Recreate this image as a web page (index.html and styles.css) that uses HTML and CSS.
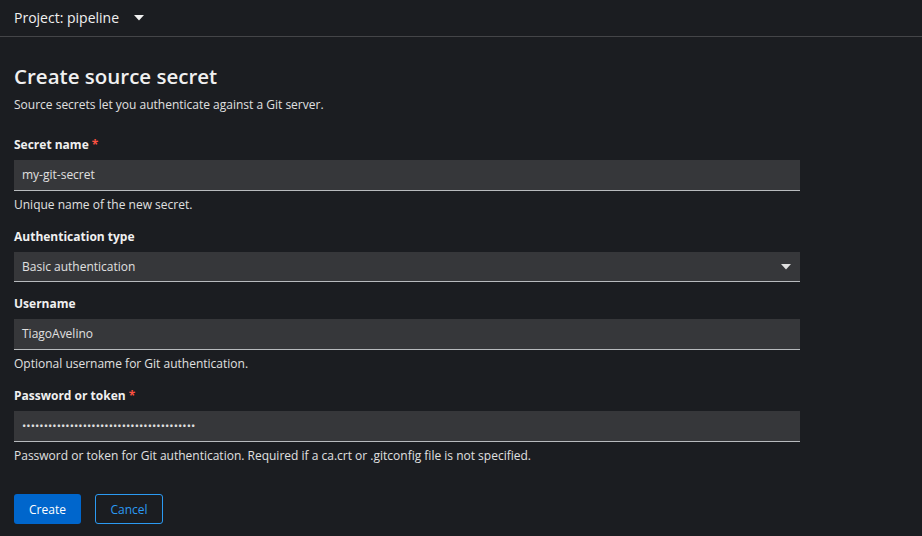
FILE: index.html
```html
<!DOCTYPE html>
<html lang="en">
<head>
<meta charset="utf-8">
<title>Create source secret</title>
<link rel="stylesheet" href="styles.css">
</head>
<body>
<header class="topbar">
  <button class="project-toggle" type="button">
    <span>Project: pipeline</span>
    <svg class="caret" width="10" height="6" viewBox="0 0 10 6"><path d="M0 0h10L5 5.5z" fill="#f0f0f0"/></svg>
  </button>
</header>
<main class="page">
  <h1 class="title">Create source secret</h1>
  <p class="lead">Source secrets let you authenticate against a Git server.</p>
  <form class="form">
    <div class="group">
      <label class="label">Secret name <span class="req">*</span></label>
      <div class="input">my-git-secret</div>
      <div class="help">Unique name of the new secret.</div>
    </div>
    <div class="group group-select">
      <label class="label">Authentication type</label>
      <div class="input select">
        <span>Basic authentication</span>
        <svg class="caret" width="10" height="6" viewBox="0 0 10 6"><path d="M0 0h10L5 5.5z" fill="#e0e0e0"/></svg>
      </div>
    </div>
    <div class="group">
      <label class="label">Username</label>
      <div class="input">TiagoAvelino</div>
      <div class="help">Optional username for Git authentication.</div>
    </div>
    <div class="group group-tight">
      <label class="label">Password or token <span class="req">*</span></label>
      <div class="input dots">••••••••••••••••••••••••••••••••••••••••</div>
      <div class="help">Password or token for Git authentication. Required if a ca.crt or .gitconfig file is not specified.</div>
    </div>
    <div class="actions">
      <button class="btn primary" type="button">Create</button>
      <button class="btn secondary" type="button">Cancel</button>
    </div>
  </form>
</main>
</body>
</html>
```
FILE: styles.css
```css
* { box-sizing: border-box; }
html, body { margin: 0; padding: 0; background: #1b1d21; }
body {
  font-family: "Open Sans", "Liberation Sans", sans-serif;
  color: #e0e0e0;
  width: 922px;
  height: 536px;
  overflow: hidden;
}
.topbar {
  height: 37px;
  border-bottom: 1px solid #444548;
  display: flex;
  align-items: center;
  padding: 0 14px;
}
.project-toggle {
  display: flex;
  align-items: center;
  gap: 15px;
  background: none;
  border: 0;
  padding: 0;
  color: #f0f0f0;
  font: 14px "Open Sans", "Liberation Sans", sans-serif;
  margin-top: -1px;
}
.page { padding: 26px 14px 0 14px; }
.title {
  margin: 0;
  font-size: 20.5px;
  font-weight: 600;
  line-height: 26px;
  color: #f0f0f0;
}
.lead {
  margin: 7px 0 0 0;
  font-size: 12px;
  line-height: 18px;
  color: #e0e0e0;
}
.form {
  width: 786px;
  margin-top: 22px;
  display: flex;
  flex-direction: column;
  gap: 15px;
}
.label {
  display: block;
  font-size: 12px;
  font-weight: 700;
  line-height: 18px;
  color: #f0f0f0;
  margin-bottom: 6px;
}
.req { color: #fe5142; }
.input {
  height: 31px;
  background: #36373a;
  border-bottom: 1px solid #b8bbbe;
  font-size: 12px;
  line-height: 30px;
  padding: 0 8px;
  color: #e0e0e0;
  display: flex;
  align-items: center;
}
.select { justify-content: space-between; padding-right: 9px; height: 30px; }
.group-select { margin-top: -1px; margin-bottom: -2px; }
.group-tight { margin-top: -1px; }
.dots { font-size: 11.4px; letter-spacing: 0.05px; }
.help {
  font-size: 12px;
  line-height: 18px;
  margin-top: 5px;
  color: #e0e0e0;
}
.actions {
  display: flex;
  gap: 14px;
  margin-top: 14px;
}
.btn {
  height: 30px;
  font: 12px "Open Sans", "Liberation Sans", sans-serif;
  border-radius: 3px;
  padding: 0 13px;
  cursor: pointer;
}
.primary { background: #0066cc; color: #fff; border: 0; width: 67px; }
.secondary { background: transparent; color: #2b9af3; border: 1px solid #2b9af3; width: 68px; }
```
